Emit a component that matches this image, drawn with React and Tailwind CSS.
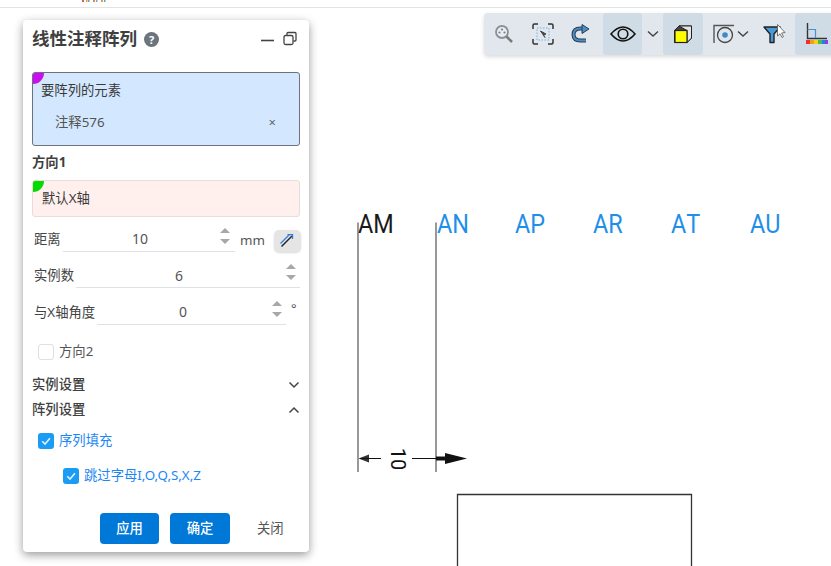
import React from "react";

const CJK = { fontFamily: '"Noto Sans", "Noto Sans CJK SC", sans-serif' };

function Spinner() {
  return (
    <svg width="12" height="20" viewBox="0 0 12 20" className="shrink-0">
      <path d="M6 2 L11 7 H1 Z" fill="#a8a8a8" />
      <path d="M1 13 H11 L6 18 Z" fill="#a8a8a8" />
    </svg>
  );
}

function Check({ on }) {
  return (
    <span className={"w-4 h-4 rounded-[3px] flex items-center justify-center shrink-0 " + (on ? "bg-[#1a9cf5]" : "bg-white border border-[#dcdfe4]")}>
      {on && (
        <svg width="12" height="12" viewBox="0 0 12 12">
          <path d="M2.2 6.2 L5 9 L10 3.2" fill="none" stroke="#dff1fd" strokeWidth="1.6" />
        </svg>
      )}
    </span>
  );
}

function Field({ label, value, unit, lineW, valueW, labelW, spinR, rowH, extra }) {
  return (
    <div className="flex items-center" style={{ height: rowH }}>
      <span className="text-[13.33px] text-[#444] shrink-0 pl-[2px]" style={{ width: labelW }}>{label}</span>
      <div className="relative shrink-0 flex items-center justify-start h-[25px] border-b border-[#dfe0e8] mt-[-1px]" style={{ width: lineW }}>
        <span className="text-[14px] text-[#555]" style={{ width: valueW, textAlign: "center" }}>{value}</span>
        <span className="absolute top-[-1px]" style={{ right: spinR }}><Spinner /></span>
      </div>
      {unit}
      {extra}
    </div>
  );
}

function Panel() {
  return (
    <div style={CJK} className="absolute left-[23px] top-[20px] w-[286px] h-[532px] bg-white rounded-[4px] shadow-[0_3px_10px_rgba(0,0,0,0.4)] px-[9px] flex flex-col">
      <div className="flex items-center h-[38px] shrink-0">
        <span className="text-[17.5px] font-bold text-[#3f3f3f] leading-none">线性注释阵列</span>
        <span className="ml-[7px] w-[15px] h-[15px] rounded-full bg-[#6c757d] text-white text-[11px] font-bold flex items-center justify-center leading-none">?</span>
        <svg width="40" height="16" viewBox="0 0 40 16" className="ml-auto mr-[-1px]">
          <path d="M0 9.5 H13" stroke="#444" strokeWidth="1.6" />
          <rect x="23" y="4.5" width="9" height="9" rx="1.5" fill="none" stroke="#444" strokeWidth="1.3" />
          <path d="M26 4 V2.5 Q26 1.5 27 1.5 H34 Q35 1.5 35 2.5 V9 Q35 10 34 10 H32.5" fill="none" stroke="#444" strokeWidth="1.3" />
        </svg>
      </div>

      <div className="relative mt-[14px] h-[74px] shrink-0 rounded-[3px] bg-[#d3e8fe] border border-[#6b7280] overflow-hidden">
        <span className="absolute left-0 top-0 w-[11px] h-[11px] bg-[#c90ff0] rounded-br-full" />
        <div className="pl-[8px] pt-[7px] text-[13.33px] leading-[20px] text-[#3a3a3a]">要阵列的元素</div>
        <div className="flex items-center justify-between pl-[22px] pr-[23px] mt-[12px] text-[13.33px] leading-[20px] text-[#555]">
          <span>注释576</span>
          <span className="text-[13px] text-[#666]">×</span>
        </div>
      </div>

      <div className="mt-[6px] h-[20px] text-[13.33px] font-bold leading-[20px] text-[#3f3f3f] shrink-0">方向1</div>

      <div className="relative mt-[8px] h-[37px] shrink-0 rounded-[3px] bg-[#fff0ee] border border-[#e8dcdc] overflow-hidden">
        <span className="absolute left-0 top-0 w-[11px] h-[11px] bg-[#00dc00] rounded-br-full" />
        <div className="pl-[9px] pt-[7px] text-[13.33px] leading-[20px] text-[#3a3a3a]">默认X轴</div>
      </div>

      <div className="mt-[4px] shrink-0">
        <Field
          label="距离"
          value="10"
          labelW={31}
          lineW={172}
          valueW={154}
          spinR={4}
          rowH={37}
          unit={<span className="ml-[5px] mt-[3px] text-[13.33px] text-[#555] shrink-0">mm</span>}
          extra={
            <span className="ml-[9px] mt-[2px] w-[27px] h-[22px] shrink-0 rounded-[5px] bg-[#e5e5e5] shadow-[0_1px_2px_rgba(0,0,0,0.15)] flex items-center justify-center">
              <svg width="14" height="14" viewBox="0 0 14 14">
                <path d="M1.5 12.5 L12 2" stroke="#222" strokeWidth="1.4" />
                <path d="M0.5 9.5 L9 1" stroke="#2f7de1" strokeWidth="1.3" />
                <path d="M7.5 0.5 H12.5 V5" fill="none" stroke="#2f7de1" strokeWidth="1.3" />
              </svg>
            </span>
          }
        />
        <Field label="实例数" value="6" labelW={44} lineW={224} valueW={206} spinR={3} rowH={36} />
        <Field
          label="与X轴角度"
          value="0"
          labelW={65}
          lineW={189}
          valueW={172}
          spinR={3}
          rowH={37}
          unit={<span className="ml-[5px] mt-[-8px] text-[13px] text-[#555]">°</span>}
        />
      </div>

      <label className="mt-[11px] pl-[6px] h-[20px] flex items-center gap-[5px] shrink-0">
        <Check />
        <span className="text-[13.33px] text-[#555]">方向2</span>
      </label>

      <div className="mt-[13px] h-[20px] flex items-center justify-between shrink-0">
        <span className="text-[13.33px] font-medium text-[#3f3f3f]">实例设置</span>
        <svg width="12" height="8" viewBox="0 0 12 8"><path d="M1.5 1.5 L6 6 L10.5 1.5" fill="none" stroke="#444" strokeWidth="1.5" /></svg>
      </div>
      <div className="mt-[5px] h-[20px] flex items-center justify-between shrink-0">
        <span className="text-[13.33px] font-medium text-[#3f3f3f]">阵列设置</span>
        <svg width="12" height="8" viewBox="0 0 12 8"><path d="M1.5 6.5 L6 2 L10.5 6.5" fill="none" stroke="#444" strokeWidth="1.5" /></svg>
      </div>

      <div className="mt-[11px] pl-[6px] h-[20px] flex items-center gap-[5px] shrink-0">
        <Check on />
        <span className="text-[13.33px] text-[#1b87f5]">序列填充</span>
      </div>
      <div className="mt-[15px] pl-[31px] h-[20px] flex items-center gap-[5px] shrink-0">
        <Check on />
        <span className="text-[13.33px] text-[#1b87f5]">跳过字母I,O,Q,S,X,Z</span>
      </div>

      <div className="mt-[27px] flex items-center shrink-0 pl-[68px]">
        <span className="w-[59px] h-[31px] rounded-[4px] bg-[#0078d7] text-white text-[13.33px] font-medium flex items-center justify-center">应用</span>
        <span className="ml-[11px] w-[60px] h-[31px] rounded-[4px] bg-[#0078d7] text-white text-[13.33px] font-medium flex items-center justify-center">确定</span>
        <span className="ml-[27px] text-[13.33px] text-[#555]">关闭</span>
      </div>
    </div>
  );
}

function Chev({ className = "" }) {
  return (
    <svg width="12" height="8" viewBox="0 0 12 8" className={className}>
      <path d="M1 1.5 L6 6 L11 1.5" fill="none" stroke="#444" strokeWidth="1.4" />
    </svg>
  );
}

function Toolbar() {
  return (
    <div className="absolute left-[484px] top-[13px] w-[360px] h-[42px] bg-[#e2e6ed] rounded-[4px] shadow-[0_2px_4px_rgba(0,0,0,0.15)] flex items-center">
      <span className="w-[39px] h-full flex items-center justify-center">
        <svg width="20" height="20" viewBox="0 0 20 20">
          <circle cx="8" cy="8" r="6" fill="#e8ecf2" stroke="#8a9097" strokeWidth="1.8" />
          <circle cx="8" cy="5.5" r="1.1" fill="#7a808a" /><circle cx="5.5" cy="8.5" r="1.1" fill="#7a808a" /><circle cx="10.5" cy="8.5" r="1.1" fill="#7a808a" />
          <path d="M12.5 12.5 L18 18" stroke="#7a7a7a" strokeWidth="2.6" />
        </svg>
      </span>
      <span className="w-[39px] h-full flex items-center justify-center">
        <svg width="22" height="22" viewBox="0 0 22 22">
          <path d="M1 6 V2.5 Q1 1 2.5 1 H6 M16 1 H19.5 Q21 1 21 2.5 V6 M21 16 V19.5 Q21 21 19.5 21 H16 M6 21 H2.5 Q1 21 1 19.5 V16" fill="none" stroke="#333" strokeWidth="1.5" />
          <rect x="5" y="5" width="12" height="12" fill="none" stroke="#6db4ee" strokeWidth="1" strokeDasharray="1.5 1.5" />
          <path d="M8.5 8 L14 11 L11.5 12 L13 14.5 L8.5 8 Z" fill="#444" stroke="#444" strokeWidth="1" />
        </svg>
      </span>
      <span className="w-[41px] h-full flex items-center justify-start pl-[9px]">
        <svg width="20" height="20" viewBox="0 0 20 20">
          <path d="M15 16.5 H9.5 Q2.5 16.5 2.5 10.5 Q2.5 4.5 9.5 4.5 H12" fill="none" stroke="#2c3e50" strokeWidth="4" />
          <path d="M15 16.5 H9.5 Q2.5 16.5 2.5 10.5 Q2.5 4.5 9.5 4.5 H12" fill="none" stroke="#4a8ec8" strokeWidth="2" />
          <path d="M11 0.5 L18 5 L11 9.5 Z" fill="#4a8ec8" stroke="#2c3e50" strokeWidth="1" />
        </svg>
      </span>
      <span className="w-[39px] h-full bg-[#d0dce5] rounded-[3px] flex items-center justify-center">
        <svg width="26" height="18" viewBox="0 0 26 18">
          <path d="M1 9 Q13 -5 25 9 Q13 23 1 9 Z" fill="none" stroke="#111" strokeWidth="1.6" />
          <circle cx="13" cy="9" r="4.8" fill="none" stroke="#111" strokeWidth="1.6" />
        </svg>
      </span>
      <span className="w-[21px] flex justify-center"><Chev /></span>
      <span className="w-[40px] h-full bg-[#d0dce5] rounded-[3px] flex items-center justify-center">
        <svg width="20" height="20" viewBox="0 0 20 20">
          <path d="M1.5 6.5 L6 2 H18.5 V14 L14 18.5 H1.5 Z" fill="#444" stroke="#222" strokeWidth="1" strokeLinejoin="round" />
          <path d="M6 2 H18.5 V14 L14 18.5 V6.5 Z" fill="#e6e6e6" stroke="#222" strokeWidth="1" strokeLinejoin="round" />
          <rect x="2" y="6.5" width="12" height="12" fill="#fdfd00" stroke="#222" strokeWidth="1.2" />
        </svg>
      </span>
      <span className="ml-[8px] w-[25px] flex justify-center">
        <svg width="22" height="20" viewBox="0 0 22 20">
          <path d="M1 19 V1.5 H21" fill="none" stroke="#555" strokeWidth="1.4" />
          <circle cx="12" cy="11" r="7.5" fill="none" stroke="#444" strokeWidth="1.3" />
          <circle cx="12" cy="11" r="2.8" fill="#3f8ac9" />
        </svg>
      </span>
      <Chev className="ml-[1px]" />
      <span className="ml-[14px] w-[24px] flex justify-center">
        <svg width="24" height="20" viewBox="0 0 24 20">
          <path d="M1 3 H17 L11 10 V18.5 H7 V10 Z" fill="#4a9ad8" stroke="#222" strokeWidth="1.4" strokeLinejoin="round" />
          <path d="M14.5 0.5 V12 L17 9.8 L19 13.5 L20.5 12.7 L18.6 9 L22 8.5 Z" fill="#fff" stroke="#555" strokeWidth="0.8" />
        </svg>
      </span>
      <span className="ml-[8px] w-[40px] h-full bg-[#d0dce5] rounded-[3px] flex items-center pl-[11px]">
        <svg width="22" height="22" viewBox="0 0 22 22">
          <path d="M1.5 0 V15.5 H21" fill="none" stroke="#333" strokeWidth="1.4" />
          <path d="M1.5 6.5 H9.5 V15" fill="none" stroke="#4a90d9" strokeWidth="1.2" />
          <rect x="0" y="17" width="4" height="4" fill="#f03030" />
          <rect x="4" y="17" width="4" height="4" fill="#f59a23" />
          <rect x="8" y="17" width="4" height="4" fill="#f2d21f" />
          <rect x="12" y="17" width="4" height="4" fill="#3cc24a" />
          <rect x="16" y="17" width="3" height="4" fill="#2f7de1" />
          <rect x="19" y="17" width="3" height="4" fill="#8a3fe0" />
        </svg>
      </span>
    </div>
  );
}

function Drawing() {
  const letters = [
    ["AM", 358, "#1a1a1a"],
    ["AN", 437, "#1f8fe8"],
    ["AP", 515, "#1f8fe8"],
    ["AR", 593, "#1f8fe8"],
    ["AT", 671, "#1f8fe8"],
    ["AU", 750, "#1f8fe8"],
  ];
  return (
    <>
      {letters.map(([t, x, c]) => (
        <span
          key={t}
          className="absolute top-[209px] text-[26px] leading-[30px] origin-left scale-x-[0.9] [font-kerning:none]"
          style={{ left: x, color: c, fontFamily: "Roboto, sans-serif" }}
        >
          {t}
        </span>
      ))}
      <svg width="831" height="566" viewBox="0 0 831 566" className="absolute left-0 top-0 pointer-events-none">
        <path d="M358 222.5 V472 M436 222.5 V472" stroke="#555" strokeWidth="1.2" />
        <path d="M358.5 458.5 L369 454.5 V462.5 Z" fill="#333" />
        <path d="M360 458.5 H381 M412 458.5 H444" stroke="#111" strokeWidth="1" />
        <path d="M436 456.5 H445 V460.5 H436 Z" fill="#111" />
        <path d="M445 453 L467 458.5 L445 464 Z" fill="#111" />
        <path d="M457.5 566 V494.5 H691.5 V566" fill="none" stroke="#333" strokeWidth="1.3" />
      </svg>
      <span
        className="absolute left-[386px] top-[449px] w-[24px] h-[20px] text-[20px] leading-[20px] text-center rotate-90 text-[#111]"
        style={{ fontFamily: "Roboto, sans-serif" }}
      >
        10
      </span>
    </>
  );
}

export default function App() {
  return (
    <div className="relative w-[831px] h-[566px] overflow-hidden bg-white" style={CJK}>
      <div className="h-[8px] border-b border-[#e3e3e3] relative">
        <svg width="30" height="3" viewBox="0 0 30 3" className="absolute left-[81px] top-0">
          <rect x="1" y="0" width="2" height="2" fill="#c9654a" />
          <rect x="5" y="0" width="1.5" height="2" fill="#e0a040" />
          <rect x="7" y="0" width="1.5" height="2" fill="#6a9ad0" />
          <rect x="12" y="0" width="2" height="2" fill="#d08a60" />
          <rect x="15" y="0" width="1.5" height="2" fill="#8aa0c0" />
          <rect x="20" y="0" width="2" height="2" fill="#e0a040" />
          <rect x="23" y="0" width="1.5" height="2" fill="#6a9ad0" />
        </svg>
      </div>
      <Drawing />
      <Toolbar />
      <Panel />
    </div>
  );
}
